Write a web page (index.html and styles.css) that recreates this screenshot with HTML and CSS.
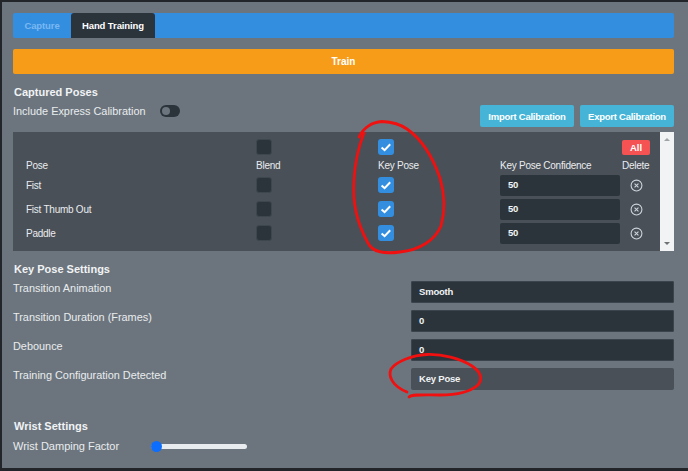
FILE: index.html
```html
<!DOCTYPE html>
<html lang="en">
   <head>
      <meta charset="UTF-8">
      <meta name="viewport" content="width=device-width, initial-scale=1.0">
      <title>Hand Training</title>
      <link rel="stylesheet" href="styles.css">
   </head>
   <body>
      <div class="container">
         <nav class="tabs">
            <a class="tab">Capture</a>
            <a class="tab active">Hand Training</a>
         </nav>
         <button class="train">Train</button>

         <h2 class="captured-title">Captured Poses</h2>
         <div class="express-row">
            <div class="express">
               <span class="express-label">Include Express Calibration</span>
               <span class="switch"><span class="knob"></span></span>
            </div>
            <div class="calibration">
               <button class="btn-info">Import Calibration</button>
               <button class="btn-info">Export Calibration</button>
            </div>
         </div>

         <div class="poses">
            <div class="poses-table">
               <div class="row top">
                  <span></span>
                  <span class="check"></span>
                  <span class="check on"><svg viewBox="0 0 16 16"><path d="M3.6 8.4l3 2.8 5.6-6"/></svg></span>
                  <span></span>
                  <button class="btn-all">All</button>
               </div>
               <div class="row head">
                  <span>Pose</span>
                  <span>Blend</span>
                  <span>Key Pose</span>
                  <span>Key Pose Confidence</span>
                  <span>Delete</span>
               </div>
               <div class="row">
                  <span>Fist</span>
                  <span class="check"></span>
                  <span class="check on"><svg viewBox="0 0 16 16"><path d="M3.6 8.4l3 2.8 5.6-6"/></svg></span>
                  <span class="field">50</span>
                  <svg class="delete" viewBox="0 0 12 12"><circle cx="6" cy="6" r="5"/><path d="M4.2 4.2l3.6 3.6M7.8 4.2l-3.6 3.6"/></svg>
               </div>
               <div class="row">
                  <span>Fist Thumb Out</span>
                  <span class="check"></span>
                  <span class="check on"><svg viewBox="0 0 16 16"><path d="M3.6 8.4l3 2.8 5.6-6"/></svg></span>
                  <span class="field">50</span>
                  <svg class="delete" viewBox="0 0 12 12"><circle cx="6" cy="6" r="5"/><path d="M4.2 4.2l3.6 3.6M7.8 4.2l-3.6 3.6"/></svg>
               </div>
               <div class="row">
                  <span>Paddle</span>
                  <span class="check"></span>
                  <span class="check on"><svg viewBox="0 0 16 16"><path d="M3.6 8.4l3 2.8 5.6-6"/></svg></span>
                  <span class="field">50</span>
                  <svg class="delete" viewBox="0 0 12 12"><circle cx="6" cy="6" r="5"/><path d="M4.2 4.2l3.6 3.6M7.8 4.2l-3.6 3.6"/></svg>
               </div>
            </div>
            <div class="scrollbar">
               <span class="arrow up"></span>
               <span class="arrow down"></span>
            </div>
         </div>

         <h2 class="keypose-title">Key Pose Settings</h2>
         <div class="setting">
            <label>Transition Animation</label>
            <span class="field wide">Smooth</span>
         </div>
         <div class="setting">
            <label>Transition Duration (Frames)</label>
            <span class="field wide">0</span>
         </div>
         <div class="setting">
            <label>Debounce</label>
            <span class="field wide">0</span>
         </div>
         <div class="setting">
            <label>Training Configuration Detected</label>
            <span class="field wide readonly">Key Pose</span>
         </div>

         <h2 class="wrist-title">Wrist Settings</h2>
         <div class="wrist">
            <label for="damping">Wrist Damping Factor</label>
            <input type="range" id="damping" min="0" max="100" value="0">
         </div>
      </div>

      <!-- red marker scribbles on top of the screenshot -->
      <svg class="scribble" width="688" height="471" viewBox="0 0 688 471">
         <path d="M359 137C363 128 372 122 382 121.5C392 122 400 124 407 129C420 138 432 155 440 178C445 195 445 212 441 226C435 240 420 250 400 252C385 254 373 253 368 243C358 225 352 205 354 180C355 162 358 148 364 133"/>
         <path d="M409 397C412 394 425 395 440 395C455 395 470 392 478 385C483 379 481 372 472 366C460 358 442 354 427 354.500C412 355 396 362 391 369C388 376 392 386 407 392"/>
      </svg>
   </body>
</html>
```

FILE: styles.css
```css
* {
box-sizing: border-box;
}
html, body {
margin: 0;
padding: 0;
}
body {
width: 688px;
height: 471px;
overflow: hidden;
background-color: #22262a;
font-family: "Liberation Sans", Arial, sans-serif;
font-size: 11px;
color: #e9ecef;
position: relative;
}
.container {
margin: 2px 0 0 2px;
width: 686px;
height: 466px;
padding: 11px 14px 0 11px;
background-color: #6c757d;
}
.tabs {
display: flex;
height: 25px;
background-color: #338edf;
border-radius: 2px;
}
.tab {
display: flex;
align-items: center;
justify-content: center;
font-size: 9.500px;
letter-spacing: -.1px;
font-weight: 700;
color: #7ab8f2;
width: 58px;
}
.tab.active {
width: 84px;
color: #fff;
background-color: #2b333b;
border-radius: 3px 3px 0 0;
}
button {
font-family: inherit;
border: none;
color: #fff;
font-weight: 700;
}
.train {
display: block;
width: 100%;
height: 25px;
margin-top: 11px;
background-color: #f79c19;
border-radius: 2px;
font-size: 10px;
}
h2 {
margin: 0;
padding-left: 1px;
font-size: 11px;
font-weight: 700;
color: #f1f3f5;
line-height: 14px;
}
.captured-title {
margin-top: 11px;
}
.express-row {
display: flex;
justify-content: space-between;
height: 33px;
padding-top: 6px;
}
.express {
display: flex;
align-items: flex-start;
line-height: 13px;
}
.express-label {
width: 147px;
font-size: 10.900px;
}
.switch {
display: block;
width: 20px;
height: 12px;
border-radius: 6px;
background-color: #2b333b;
padding: 2px;
}
.knob {
display: block;
width: 8px;
height: 8px;
border-radius: 50%;
background-color: #6c757d;
}
.calibration {
display: flex;
gap: 6px;
height: 22px;
}
.btn-info {
width: 94px;
height: 22px;
padding: 0;
background-color: #45b4d6;
border-radius: 2px;
font-size: 9.500px;
letter-spacing: -.25px;
}
.poses {
display: flex;
height: 119px;
background-color: #495057;
}
.poses-table {
flex: 1;
padding: 7px 0 0 13px;
font-size: 10px;
letter-spacing: -.25px;
}
.row {
display: grid;
grid-template-columns: 230px 122px 122px 122px 38px;
align-items: center;
height: 24px;
}
.row.top {
height: 16px;
}
.row.head {
height: 18px;
padding-top: 2px;
}
.check {
display: block;
width: 16px;
height: 16px;
background-color: #2b333b;
border: 1px solid #3e464e;
border-radius: 3px;
}
.check.on {
background-color: #338edf;
border-width: 0;
}
.check svg {
display: block;
width: 16px;
height: 16px;
}
.check path {
fill: none;
stroke: #fff;
stroke-width: 2;
}
.btn-all {
width: 28px;
height: 15px;
padding: 0;
background-color: #f55353;
border-radius: 2px;
font-size: 9.500px;
letter-spacing: 0;
}
.field {
display: flex;
align-items: center;
height: 21px;
width: 120px;
padding: 0 0 2px 8px;
background-color: #2b333b;
border-radius: 2px;
font-size: 9.500px;
letter-spacing: -.2px;
font-weight: 700;
color: #f1f3f5;
}
.delete {
width: 13px;
height: 13px;
margin: 1px 0 0 8px;
fill: none;
stroke: #ced4da;
stroke-width: 1;
}
.scrollbar {
display: flex;
flex-direction: column;
justify-content: space-between;
align-items: center;
width: 14px;
padding: 6px 0;
background-color: #f1f3f5;
}
.arrow {
width: 0;
height: 0;
border-left: 3px solid transparent;
border-right: 3px solid transparent;
}
.arrow.up {
border-bottom: 3px solid #a0a4a8;
}
.arrow.down {
border-top: 3px solid #6e7276;
}
.keypose-title {
margin-top: 11px;
}
.setting {
display: flex;
justify-content: space-between;
height: 29px;
}
.keypose-title + .setting {
margin-top: 5px;
}
.setting label {
padding-top: 1px;
line-height: 13px;
font-size: 10.900px;
}
.field.wide {
width: 263px;
height: 22px;
box-shadow: inset 0 0 0 1px #3b444c;
}
.field.readonly {
background-color: #495057;
box-shadow: none;
}
.wrist-title {
margin-top: 22px;
}
.wrist {
display: flex;
align-items: flex-start;
margin-top: 7px;
}
.wrist label {
width: 138px;
line-height: 13px;
}
.wrist input {
-webkit-appearance: none;
appearance: none;
width: 96px;
height: 5px;
margin: 4px 0 0;
background-color: #e9ecef;
border-radius: 3px;
}
.wrist input::-webkit-slider-thumb {
-webkit-appearance: none;
appearance: none;
width: 11px;
height: 11px;
border-radius: 50%;
background-color: #0d6efd;
}
.scribble {
position: absolute;
left: 0;
top: 0;
pointer-events: none;
}
.scribble path {
fill: none;
stroke: #f01010;
stroke-width: 2.800;
stroke-linecap: round;
stroke-linejoin: round;
}
```
